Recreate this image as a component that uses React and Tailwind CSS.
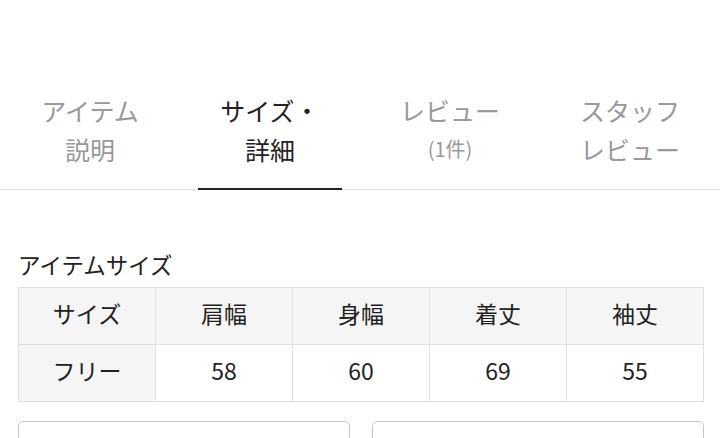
import React from 'react'

const tabs = [
  { lines: ['アイテム', '説明'], active: false },
  { lines: ['サイズ・', '詳細'], active: true },
  { lines: ['レビュー', '(1件)'], active: false, small: true },
  { lines: ['スタッフ', 'レビュー'], active: false },
]

const heads = ['サイズ', '肩幅', '身幅', '着丈', '袖丈']
const values = ['フリー', '58', '60', '69', '55']

const App = () => {
  return (
    <div
      className="w-[720px] h-[438px] overflow-hidden bg-white text-[#222]"
      style={{ fontFamily: '"Noto Sans CJK JP", "Noto Sans", sans-serif' }}
    >
      {/* Tabs */}
      <div className="mt-[91px] grid grid-cols-4 border-b border-[#e0e0e0]">
        {tabs.map((t, i) => (
          <div key={i} className="relative flex flex-col items-center pb-[21px]">
            <span className={`text-[25px] leading-[39px] ${t.active ? 'text-[#222]' : 'text-[#999]'}`}>
              {t.lines[0]}
            </span>
            <span
              className={`leading-[38px] ${t.small ? 'text-[20px]' : 'text-[25px]'} ${t.active ? 'text-[#222]' : 'text-[#999]'}`}
            >
              {t.lines[1]}
            </span>
            {t.active && (
              <div className="absolute bottom-[-1px] left-[18px] right-[18px] h-[2px] bg-[#222]"></div>
            )}
          </div>
        ))}
      </div>

      {/* Size table */}
      <div className="w-[686px] ml-[18px] pt-[56px]">
        <div className="text-[22.5px] leading-[36px] mb-[5px]">アイテムサイズ</div>
        <div className="grid grid-cols-5 border-l border-t border-[#e0e0e0]">
          {heads.map((h) => (
            <div
              key={h}
              className="h-[57px] pb-[5px] flex items-center justify-center bg-[#f5f5f5] border-r border-b border-[#e0e0e0] text-[23px]"
            >
              {h}
            </div>
          ))}
          {values.map((v, i) => (
            <div
              key={i}
              className={`h-[57px] pb-[5px] flex items-center justify-center border-r border-b border-[#e0e0e0] text-[23px] ${i === 0 ? 'bg-[#f5f5f5]' : 'bg-white'}`}
            >
              {v}
            </div>
          ))}
        </div>

        {/* Select boxes */}
        <div className="mt-[19px] grid grid-cols-2 gap-[22px]">
          <div className="h-[60px] rounded-[5px] border border-[#c8c8c8]"></div>
          <div className="h-[60px] rounded-[5px] border border-[#c8c8c8]"></div>
        </div>
      </div>
    </div>
  )
}

export default App
